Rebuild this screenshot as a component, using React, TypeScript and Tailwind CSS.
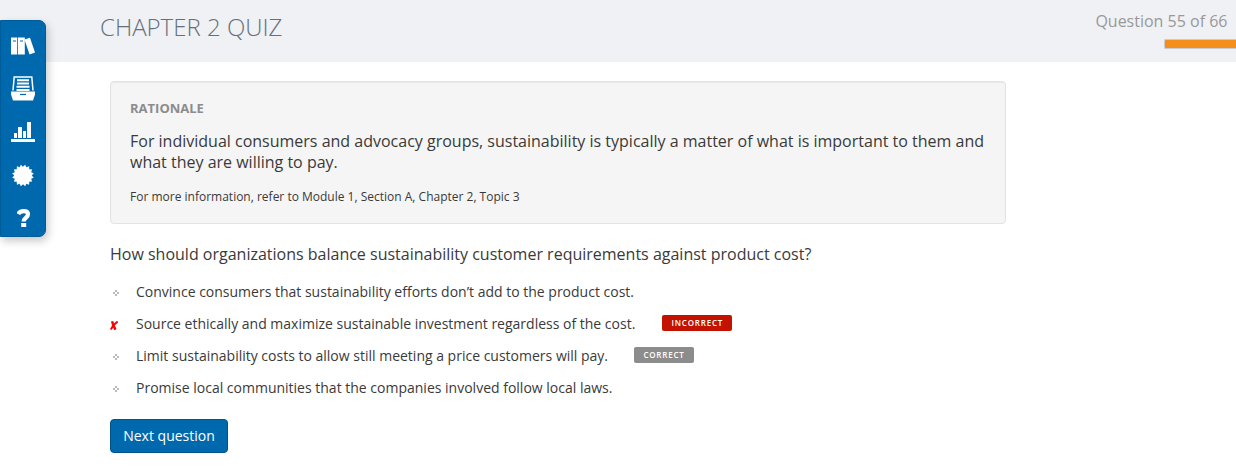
import React from "react";

const points = Array.from({ length: 32 }, (_, i) => {
  const r = i % 2 === 0 ? 11 : 8.8;
  const a = ((i + 1) * Math.PI) / 16;
  return `${(12 + r * Math.cos(a)).toFixed(2)},${(12.5 + r * Math.sin(a)).toFixed(2)}`;
}).join(" ");

function BooksIcon() {
  return (
    <svg width="24" height="18" viewBox="0 0 24 18" fill="#fff">
      <path d="M0 0.5h6.2v17H0zM7 0.5h6.8v17H7z" />
      <path d="M13.4 2.5 19 0.8 24 15.4 18.6 17.5z" />
      <path d="M2 4h3M9 4h3" stroke="#0069ae" strokeWidth="1" />
    </svg>
  );
}

function TrayIcon() {
  return (
    <svg width="24" height="25" viewBox="0 0 24 25" fill="none">
      <path d="M2 14.5 3.2 1h17.6L22 14.5" stroke="#fff" strokeWidth="1.5" />
      <path d="M6 4.2h12M6 7.5h12M5.5 10.8h13M5.5 14h13" stroke="#fff" strokeWidth="2" />
      <path d="M0 15.5h24v3l-2 6H2l-2-6z" fill="#fff" />
      <path d="M9 18.5h6" stroke="#0069ae" strokeWidth="1.2" />
    </svg>
  );
}

function ChartIcon() {
  return (
    <svg width="24" height="20" viewBox="0 0 24 20" fill="#fff">
      <path d="M3 11h3v5H3zM7 5h4v11H7zM12 9h3v7h-3zM16 0h4v16h-4zM0 17h24v3H0z" />
    </svg>
  );
}

function BadgeIcon() {
  return (
    <svg width="24" height="24" viewBox="0 0 24 24" fill="#fff">
      <polygon points={points} />
    </svg>
  );
}

function HelpIcon() {
  return (
    <svg width="14" height="18" viewBox="0 0 14 18">
      <path d="M1.2 5C2.2 2.9 4.2 2.1 6.8 2.1c3 0 4.2 1.2 4.2 3.1 0 3.5-4.3 3.4-4.3 7.4" fill="none" stroke="#fff" strokeWidth="4.2" />
      <path d="M4.2 14h5v4h-5z" fill="#fff" />
    </svg>
  );
}

function Sidebar() {
  return (
    <nav className="absolute left-0 top-5 h-[217px] w-[46px] rounded-r-[7px] border border-[#005c98] bg-[#0069ae] shadow-[2px_4px_8px_rgba(0,0,0,0.22)]">
      <div className="flex flex-col items-center pt-[3px]">
        <a className="flex h-[43px] items-center"><BooksIcon /></a>
        <a className="flex h-[43px] items-center"><TrayIcon /></a>
        <a className="flex h-[43px] items-center"><ChartIcon /></a>
        <a className="flex h-[43px] items-center"><BadgeIcon /></a>
        <a className="flex h-[43px] items-center pl-0.5 pt-px"><HelpIcon /></a>
      </div>
    </nav>
  );
}

function Dot() {
  return (
    <svg width="6" height="6" viewBox="0 0 6 6" fill="#bbb" shapeRendering="crispEdges">
      <path d="M2 0h2v2H2zM0 2h2v2H0zM4 2h2v2H4zM2 4h2v2H2z" />
    </svg>
  );
}

function Cross() {
  return (
    <svg width="8" height="9" viewBox="0 0 8 9" fill="none" stroke="#f00">
      <path d="M2.1.3C2.8 3.2 3.7 5.9 5.5 8.7" strokeWidth="2.5" />
      <path d="M7.6.5C5 2.3 2.4 5.1.8 8.5" strokeWidth="1.9" />
    </svg>
  );
}

const answers = [
  { text: "Convince consumers that sustainability efforts don’t add to the product cost.", mark: "" },
  { text: "Source ethically and maximize sustainable investment regardless of the cost.", mark: "incorrect" },
  { text: "Limit sustainability costs to allow still meeting a price customers will pay.", mark: "correct" },
  { text: "Promise local communities that the companies involved follow local laws.", mark: "" },
];

export default function App() {
  return (
    <div className="relative h-[472px] w-[1236px] overflow-hidden bg-white font-['Open_Sans',sans-serif] text-[#3a3a3a]">
      <header className="flex h-[62px] justify-between bg-[#f0f1f5] pl-[100px]">
        <h1 className="pt-[9px] text-[24px] font-light leading-9 text-[#66707a]">CHAPTER 2 QUIZ</h1>
        <div className="flex flex-col items-end">
          <div className="pr-[8.5px] pt-[9px] text-[16px] leading-6 text-[#999]">Question 55 of 66</div>
          <div className="mt-1.5 h-[10px] w-[72px] rounded-l-[2px] border border-r-0 border-[#c9cbd0] bg-[#f48f1e]" />
        </div>
      </header>
      <main className="pl-[110px] pt-[19px]">
        <section className="h-[143px] w-[896px] rounded-[4px] border border-[#e3e3e3] bg-[#f5f5f5] pl-[19px] pt-[16px] shadow-[inset_0_1px_1px_rgba(0,0,0,0.05)]">
          <h2 className="text-[13px] font-bold leading-5 text-[#8c8c8c]">RATIONALE</h2>
          <p className="mt-[13px] whitespace-nowrap text-[16px] leading-[21px]">
            For individual consumers and advocacy groups, sustainability is typically a matter of what is important to them and
            <br />
            what they are willing to pay.
          </p>
          <p className="mt-[15px] text-[12px] leading-[18px]">For more information, refer to Module 1, Section A, Chapter 2, Topic 3</p>
        </section>
        <h3 className="mt-[18px] text-[16px] leading-6">How should organizations balance sustainability customer requirements against product cost?</h3>
        <ul className="mt-[10px]">
          {answers.map((a) => (
            <li key={a.text} className="flex h-8 items-center whitespace-nowrap text-[14px]">
              <span className={a.mark === "incorrect" ? "flex w-[26px] pt-0.5" : "flex w-[26px] pl-[3px] pt-0.5"}>
                {a.mark === "incorrect" ? <Cross /> : <Dot />}
              </span>
              <span className="pb-0.5">{a.text}</span>
              {a.mark === "incorrect" && (
                <span className="mb-[2px] ml-[27px] flex h-4 w-[70px] items-center justify-center rounded-[2px] bg-[#c41200] text-[8px] font-semibold tracking-[0.8px] text-white">INCORRECT</span>
              )}
              {a.mark === "correct" && (
                <span className="mb-[2px] ml-[26px] flex h-4 w-[60px] items-center justify-center rounded-[2px] bg-[#8c8c8c] text-[8px] font-semibold tracking-[0.8px] text-white">CORRECT</span>
              )}
            </li>
          ))}
        </ul>
        <button className="mt-[15px] block h-[34px] w-[118px] rounded-[4px] border border-[#005288] bg-[#0069ae] pb-0.5 text-[14px] font-medium text-white">Next question</button>
      </main>
      <Sidebar />
    </div>
  );
}
